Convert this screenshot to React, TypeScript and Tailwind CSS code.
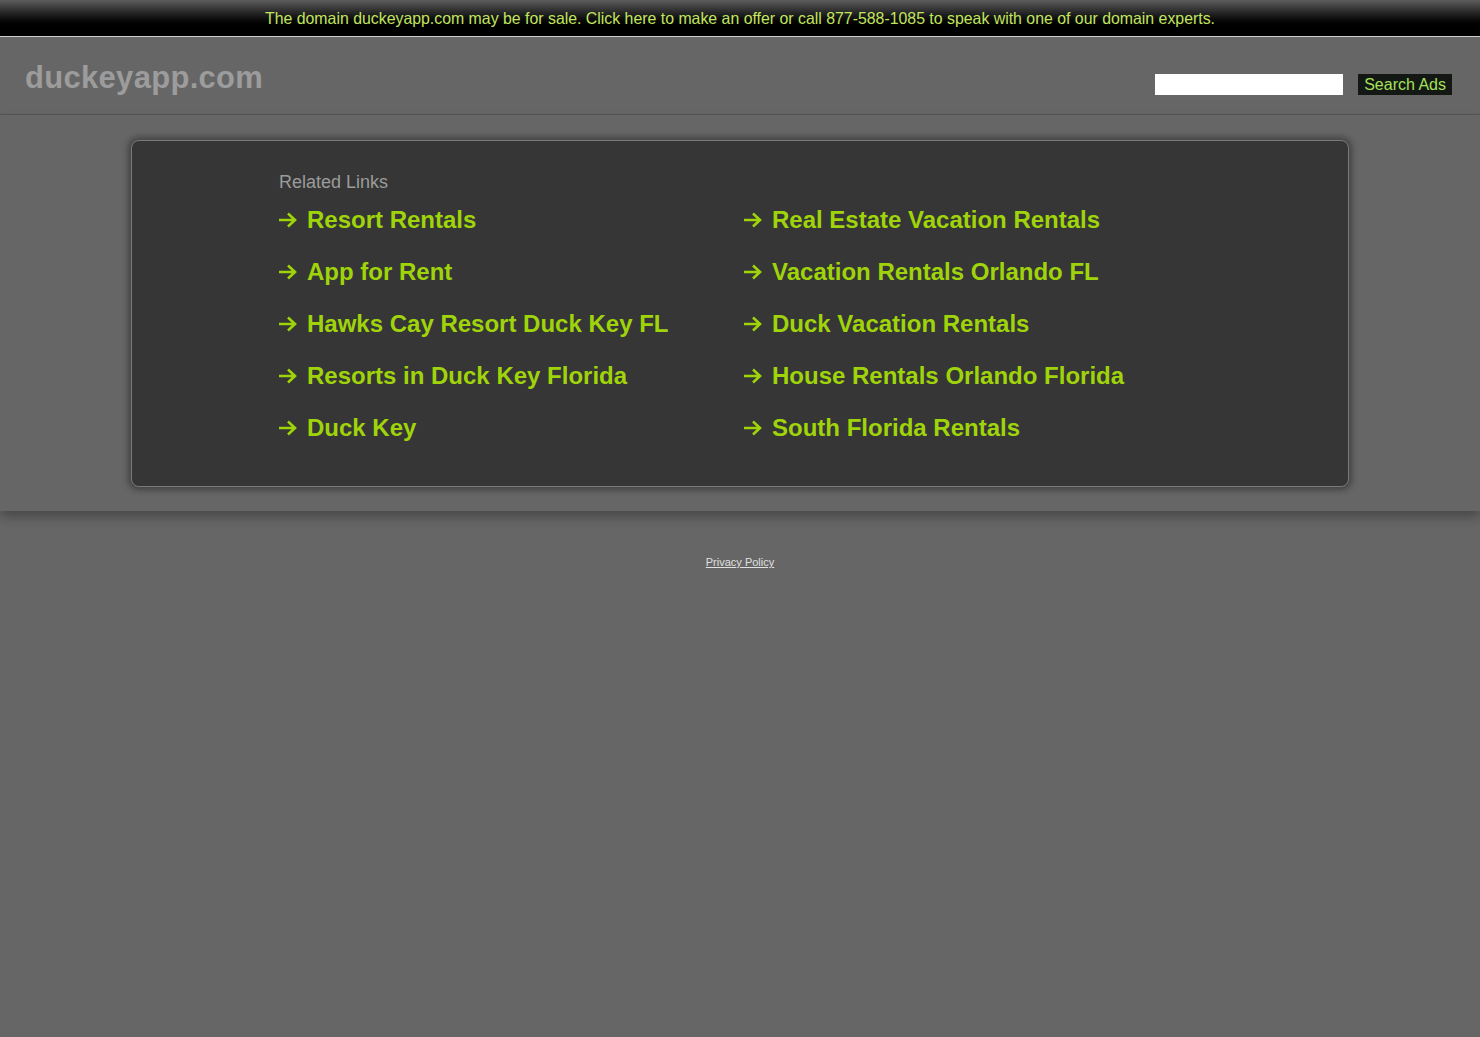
import React from 'react';

const leftLinks = ['Resort Rentals', 'App for Rent', 'Hawks Cay Resort Duck Key FL', 'Resorts in Duck Key Florida', 'Duck Key'];
const rightLinks = ['Real Estate Vacation Rentals', 'Vacation Rentals Orlando FL', 'Duck Vacation Rentals', 'House Rentals Orlando Florida', 'South Florida Rentals'];

const Arrow: React.FC = () => (
  <svg width="20" height="16" viewBox="0 0 20 16" className="shrink-0">
    <path d="M1 8 H17 M10 1.5 L17 8 L10 14.5" fill="none" stroke="#a0d40a" strokeWidth="2.6" />
  </svg>
);

const LinkItem: React.FC<{ label: string }> = ({ label }) => (
  <a href="#" className="flex h-[52px] items-center gap-[9px] text-[24px] font-bold text-[#a0d40a] no-underline">
    <Arrow />
    <span>{label}</span>
  </a>
);

const App: React.FC = () => {
  return (
    <div className="min-h-[1037px] bg-[#666666] font-['Liberation_Sans',Arial,sans-serif]">
      {/* Sale banner */}
      <div className="flex h-[37px] items-center justify-center border-b border-[#cfcfcf] bg-gradient-to-b from-[#5e5e5e] to-[#000000] to-80% pt-[1px] text-[15.87px] text-[#c2e45e]">
        The domain duckeyapp.com may be for sale. Click here to make an offer or call 877-588-1085 to speak with one of our domain experts.
      </div>

      {/* Header */}
      <div className="flex h-[78px] items-start justify-between border-b border-[#545454] px-[25px]">
        <div className="pt-[18px] text-[31px] font-bold tracking-[0.3px] text-[#9c9c9c]">duckeyapp.com</div>
        <div className="flex items-center gap-[15px] pt-[37px] pr-[3px]">
          <input type="text" className="h-[21px] w-[188px] bg-white outline-none" />
          <button className="h-[21px] bg-[#141814] px-[6px] text-[16px] leading-[21px] text-[#a6e05a]">Search Ads</button>
        </div>
      </div>

      {/* Links band */}
      <div className="px-[131px] pt-[25px] pb-[24px] shadow-[0_6px_10px_rgba(0,0,0,0.28)]">
        <div className="w-[1218px] rounded-[8px] border border-[#7a7a7a] bg-[#363636] pb-[32px] pl-[146px] pt-[28px] shadow-[0_0_6px_3px_rgba(0,0,0,0.35)]">
          <div className="pl-[1px] text-[18px] text-[#9b9b9b]">Related Links</div>
          <div className="-mt-[2px] flex">
            <div className="w-[465px]">
              {leftLinks.map((l) => (
                <LinkItem key={l} label={l} />
              ))}
            </div>
            <div>
              {rightLinks.map((l) => (
                <LinkItem key={l} label={l} />
              ))}
            </div>
          </div>
        </div>
      </div>

      {/* Footer */}
      <div className="pt-[43px] text-center text-[11px]">
        <a href="#" className="text-[#e0e0e0] underline">Privacy Policy</a>
      </div>
    </div>
  );
};

export default App;
